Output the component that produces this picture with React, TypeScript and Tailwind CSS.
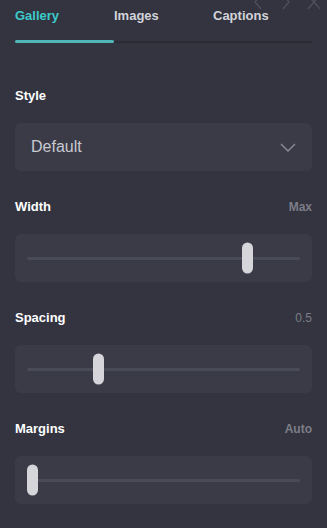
import { useState } from "react";

const TABS = ["Gallery", "Images", "Captions"];

function Slider({ label, value, pct, bold }: { label: string; value: string; pct: number; bold?: boolean }) {
  return (
    <div className="mt-[28px]">
      <div className="flex h-4 items-center justify-between">
        <span className="text-[13px] font-bold text-white">{label}</span>
        <span className={`text-[12px] text-[#7c7d87] ${bold ? "font-bold" : ""}`}>{value}</span>
      </div>
      <div className="mt-[19px] flex h-12 items-center rounded-md bg-[#3a3b47] px-3">
        <div className="relative h-[3px] flex-1 rounded-full bg-[#4a4b58]">
          <div
            className="absolute top-1/2 h-[31px] w-[11px] -translate-y-1/2 rounded-full bg-[#d5d5da]"
            style={{ left: `calc(${pct}% - ${(pct / 100) * 11}px)` }}
          />
        </div>
      </div>
    </div>
  );
}

export default function App() {
  const [tab, setTab] = useState(0);
  return (
    <div
      className="relative h-[528px] w-[327px] overflow-hidden bg-[#33343f] px-[15px]"
      style={{ fontFamily: '"Liberation Sans", Arial, sans-serif' }}
    >
      <div className="absolute right-[6px] top-[-6px] flex items-center gap-[14px] text-[#4d4e59]">
        <svg width="14" height="16" viewBox="0 0 14 16" fill="none" stroke="currentColor" strokeWidth="1.5">
          <path d="M10 1 L4 8 L10 15" />
        </svg>
        <svg width="14" height="16" viewBox="0 0 14 16" fill="none" stroke="currentColor" strokeWidth="1.5">
          <path d="M4 1 L10 8 L4 15" />
        </svg>
        <svg width="14" height="16" viewBox="0 0 14 16" fill="none" stroke="currentColor" strokeWidth="1.5">
          <path d="M1 1 L13 15 M13 1 L1 15" />
        </svg>
      </div>

      <div className="pt-[8px]">
        <div className="flex">
          {TABS.map((t, i) => (
            <button
              key={t}
              onClick={() => setTab(i)}
              className={`flex-1 text-left text-[13px] font-bold leading-4 ${
                i === tab ? "text-[#3ccaca]" : "text-[#d2d3da]"
              }`}
            >
              {t}
            </button>
          ))}
        </div>
        <div className="mt-[16px] flex items-center">
          <div className="h-[3px] w-1/3 rounded-full bg-[#4fb6ba]" />
          <div className="h-[2px] flex-1 bg-[#2a2b33]" />
        </div>
      </div>

      <div className="mt-[45px]">
        <div className="flex h-4 items-center text-[13px] font-bold text-white">Style</div>
        <div className="mt-[19px] flex h-12 items-center justify-between rounded-md bg-[#3a3b47] pl-4 pr-4">
          <span className="text-[16px] text-[#c9c9d2]">Default</span>
          <svg width="16" height="9" viewBox="0 0 16 9" fill="none" stroke="#8d8e98" strokeWidth="1.3">
            <path d="M1 1 L8 8 L15 1" />
          </svg>
        </div>
      </div>

      <Slider label="Width" value="Max" pct={82} bold />
      <Slider label="Spacing" value="0.5" pct={25} />
      <Slider label="Margins" value="Auto" pct={0} bold />
    </div>
  );
}
